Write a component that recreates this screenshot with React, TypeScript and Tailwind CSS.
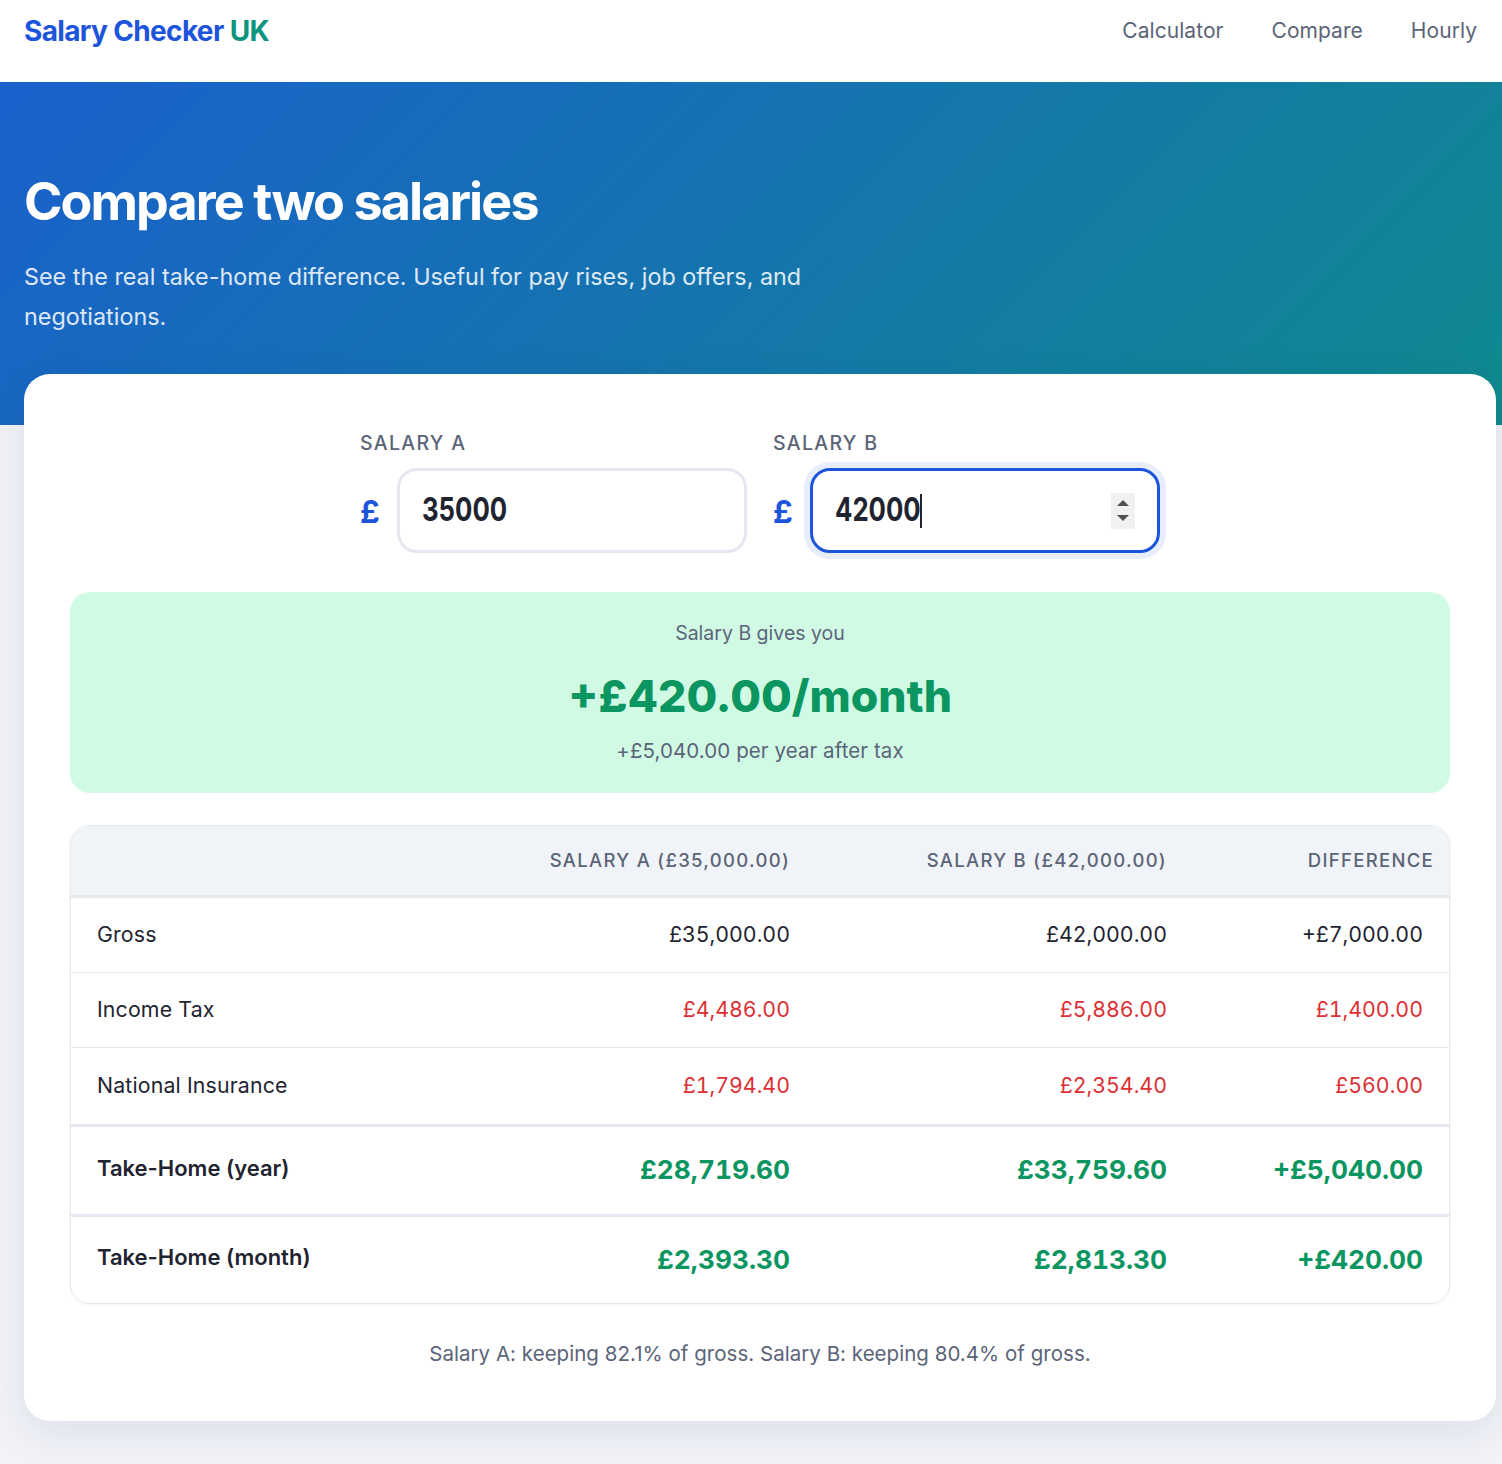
const rows = [
  { label: "Gross", a: "£35,000.00", b: "£42,000.00", d: "+£7,000.00", tone: "text-[#1f2430]", h: "h-[76px] border-b border-[#e6e8ee]" },
  { label: "Income Tax", a: "£4,486.00", b: "£5,886.00", d: "£1,400.00", tone: "text-[#dc3035]", h: "h-[75px] border-b border-[#e6e8ee]" },
  { label: "National Insurance", a: "£1,794.40", b: "£2,354.40", d: "£560.00", tone: "text-[#dc3035]", h: "h-[78px] border-b-[3px] border-[#e6e8f1]" },
]

const totals = [
  { label: "Take-Home (year)", a: "£28,719.60", b: "£33,759.60", d: "+£5,040.00" },
  { label: "Take-Home (month)", a: "£2,393.30", b: "£2,813.30", d: "+£420.00" },
]

const Spinner = () => (
  <div className="flex h-[36px] w-[24px] flex-col items-center justify-center gap-[9px] bg-[#f1f1f1]">
    <svg width="12" height="6" viewBox="0 0 12 6">
      <path d="M6 0 12 6H0z" fill="#505050" />
    </svg>
    <svg width="12" height="6" viewBox="0 0 12 6">
      <path d="M0 0h12L6 6z" fill="#505050" />
    </svg>
  </div>
)

// the digits in the inputs are tall and narrow, so squeeze them into an 85px slot
const Digits = ({ value }: { value: string }) => (
  <span className="inline-block w-[85px] whitespace-nowrap pb-[2px]">
    <span className="inline-block origin-left scale-x-[0.78]">{value}</span>
  </span>
)

const App = () => {
  return (
    <div className="h-[1464px] overflow-hidden bg-[#f1f3f8] font-['Inter',sans-serif] text-[#1f2430]">
      <nav className="flex h-[82px] items-start justify-between bg-white pl-6 pr-[25px]">
        <div className="mt-[12px] text-[28px] leading-[38px] font-bold tracking-[-0.65px] text-[#1d54dc]">
          Salary Checker <span className="text-[#0d9480]">UK</span>
        </div>
        <div className="mt-[16px] flex gap-12 text-[21px] leading-[30px] tracking-[0.05px] text-[#5b6478]">
          <a>Calculator</a>
          <a>Compare</a>
          <a>Hourly</a>
        </div>
      </nav>

      <header className="h-[343px] bg-[linear-gradient(135deg,#1a60cc_0%,#0f8a8e_100%)] px-6 pt-[89px] text-white">
        <h1 className="text-[52px] leading-[62px] font-bold tracking-[-1.9px]">Compare two salaries</h1>
        <p className="mt-[24px] max-w-[800px] text-[23.35px] leading-[40px] text-white/85">
          See the real take-home difference. Useful for pay rises, job offers, and negotiations.
        </p>
      </header>

      <main className="relative mt-[-51px] ml-6 mr-[6px] h-[1047px] rounded-[26px] bg-white px-[46px] pt-[54px] shadow-[0_10px_40px_rgba(30,40,80,0.1)]">
        <div className="flex justify-center gap-[26px]">
          <div>
            <label className="block text-[19.5px] leading-[30px] font-medium tracking-[1.3px] text-[#5b6478]">SALARY A</label>
            <div className="mt-[10px] flex items-center">
              <span className="mt-[3px] w-[37px] text-[31px] font-bold text-[#1d54dc]">£</span>
              <div className="flex h-[85px] w-[350px] items-center rounded-[20px] border-[3px] border-[#e6e8f1] pl-[22px] text-[33px] font-bold">
                <Digits value="35000" />
              </div>
            </div>
          </div>
          <div>
            <label className="block text-[19.5px] leading-[30px] font-medium tracking-[1.3px] text-[#5b6478]">SALARY B</label>
            <div className="mt-[10px] flex items-center">
              <span className="mt-[3px] w-[37px] text-[31px] font-bold text-[#1d54dc]">£</span>
              <div className="flex h-[85px] w-[350px] items-center justify-between rounded-[20px] border-[3px] border-[#1d54dc] pr-[22px] pl-[22px] text-[33px] font-bold shadow-[0_0_0_6px_#e8edfb]">
                <span className="flex items-center">
                  <Digits value="42000" />
                  <span className="h-[34px] w-[2px] bg-[#1f2430]" />
                </span>
                <Spinner />
              </div>
            </div>
          </div>
        </div>

        <section className="mt-[39px] h-[201px] rounded-[20px] bg-[#d1fae5] pt-[26px] text-center">
          <p className="text-[19.5px] leading-[30px] text-[#5b6478]">Salary B gives you</p>
          <p className="mt-[16px] text-[44.5px] leading-[64px] font-extrabold text-[#0b9560]">+£420.00/month</p>
          <p className="mt-[8px] text-[20.5px] leading-[30px] tracking-[0.08px] text-[#5b6478]">+£5,040.00 per year after tax</p>
        </section>

        <section className="mt-[32px] overflow-hidden rounded-[20px] border border-[#e6e8ee] shadow-[0_1px_3px_rgba(30,40,80,0.06)]">
          <table className="w-full table-fixed border-collapse">
            <thead>
              <tr className="h-[70px] border-b-[3px] border-[#e6e8ee] bg-[#f0f3f7] text-right text-[18.5px] tracking-[1.3px] text-[#5b6478]">
                <th className="w-[341px]" />
                <th className="w-[378px] pt-[2px] font-medium">SALARY A (£35,000.00)</th>
                <th className="w-[377px] pt-[2px] font-medium">SALARY B (£42,000.00)</th>
                <th className="pt-[2px] pr-[15px] font-medium">DIFFERENCE</th>
              </tr>
            </thead>
            <tbody>
              {rows.map((row) => (
                <tr key={row.label} className={`${row.h} text-[21.3px]`}>
                  <td className="pl-[26px] tracking-[0.15px]">{row.label}</td>
                  <td className={`text-right tabular-nums ${row.tone}`}>{row.a}</td>
                  <td className={`text-right tabular-nums ${row.tone}`}>{row.b}</td>
                  <td className={`pr-[26px] text-right tabular-nums ${row.tone}`}>{row.d}</td>
                </tr>
              ))}
              {totals.map((row, index) => (
                <tr key={row.label} className={index === 0 ? "h-[90px] border-b-[3px] border-[#e6e8f1]" : "h-[88px]"}>
                  <td className="pb-[4px] pl-[26px] text-[22px] font-semibold">{row.label}</td>
                  <td className="text-right text-[26.3px] font-bold text-[#0b9560] tabular-nums">{row.a}</td>
                  <td className="text-right text-[26.3px] font-bold text-[#0b9560] tabular-nums">{row.b}</td>
                  <td className="pr-[26px] text-right text-[26.3px] font-bold text-[#0b9560] tabular-nums">{row.d}</td>
                </tr>
              ))}
            </tbody>
          </table>
        </section>

        <p className="mt-[35px] text-center text-[20.5px] leading-[30px] tracking-[0.03px] text-[#5b6478]">
          Salary A: keeping 82.1% of gross. Salary B: keeping 80.4% of gross.
        </p>
      </main>
    </div>
  )
}

export default App
